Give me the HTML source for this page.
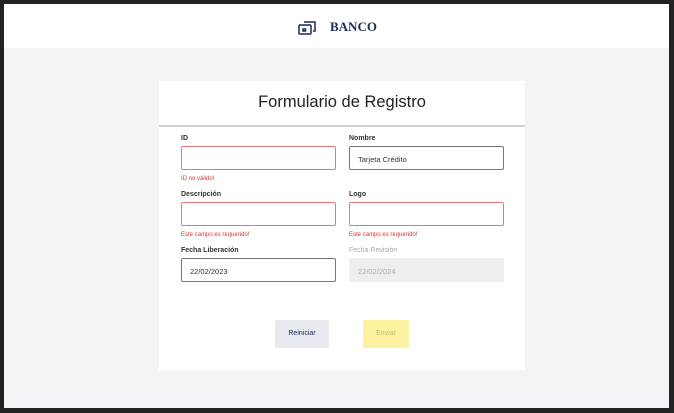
<!DOCTYPE html>
<html><head><style>
*{box-sizing:border-box;margin:0;padding:0}
body{width:674px;height:413px;background:#222;font-family:"Liberation Sans",sans-serif;position:relative;overflow:hidden}
.frame{position:absolute;left:4px;top:4px;width:665px;height:404px;background:#f3f4f7}
.hdr{position:absolute;left:0;top:0;width:665px;height:44px;background:#fff}
.brand{position:absolute;left:326px;top:15px;font-family:"Liberation Serif",serif;font-weight:bold;font-size:13px;color:#1d2a5a}
.card{position:absolute;left:155px;top:77px;width:366px;height:289px;background:#fff}
h1{position:absolute;left:0;width:366px;top:12px;text-align:center;font-size:16.5px;font-weight:normal;color:#222}
.line{position:absolute;left:0;top:44px;width:366px;height:2px;background:#cfcfcf}
.lbl{position:absolute;font-size:7px;font-weight:bold;color:#333}
.in{position:absolute;width:155px;height:24px;border:1px solid #777;border-radius:2px;font-size:7.5px;color:#333;padding:8px 0 0 8px}
.err{border-color:#e07a7a}
.msg{position:absolute;font-size:6px;color:#d33}
.dis{background:#eeeeee;border-color:#eee;color:#aaa}
.btn{position:absolute;top:239px;height:28px;font-size:7px;text-align:center;line-height:28px;border-radius:1px}
</style></head><body>
<div class="frame">
<div class="hdr">
<svg style="position:absolute;left:294px;top:16px" width="20" height="16" viewBox="0 0 20 16" fill="none" stroke="#1d2a5a" stroke-width="1.5"><rect x="1" y="5" width="12" height="9" rx="1"/><path d="M6 2h11v9h-2"/><rect x="5" y="9" width="2.5" height="2"/></svg>
<div class="brand">BANCO</div>
</div>
<div class="card">
<h1>Formulario de Registro</h1>
<div class="line"></div>
<div class="lbl" style="left:22px;top:54px">ID</div>
<div class="in err" style="left:22px;top:65px"></div>
<div class="msg" style="left:22px;top:95px">ID no válido!</div>
<div class="lbl" style="left:190px;top:54px">Nombre</div>
<div class="in" style="left:190px;top:65px">Tarjeta Crédito</div>
<div class="lbl" style="left:22px;top:110px">Descripción</div>
<div class="in err" style="left:22px;top:121px"></div>
<div class="msg" style="left:22px;top:151px">Este campo es requerido!</div>
<div class="lbl" style="left:190px;top:110px">Logo</div>
<div class="in err" style="left:190px;top:121px"></div>
<div class="msg" style="left:190px;top:151px">Este campo es requerido!</div>
<div class="lbl" style="left:22px;top:166px">Fecha Liberación</div>
<div class="in" style="left:22px;top:177px">22/02/2023</div>
<div class="lbl" style="left:190px;top:166px;color:#aaa;font-weight:normal">Fecha Revisión</div>
<div class="in dis" style="left:190px;top:177px">22/02/2024</div>
<div class="btn" style="left:116px;width:54px;background:#e8eaf0;color:#1d2a5a">Reiniciar</div>
<div class="btn" style="left:204px;width:46px;background:#fbf1a0;color:#c9bf70">Enviar</div>
</div>
</div>
</body></html>
